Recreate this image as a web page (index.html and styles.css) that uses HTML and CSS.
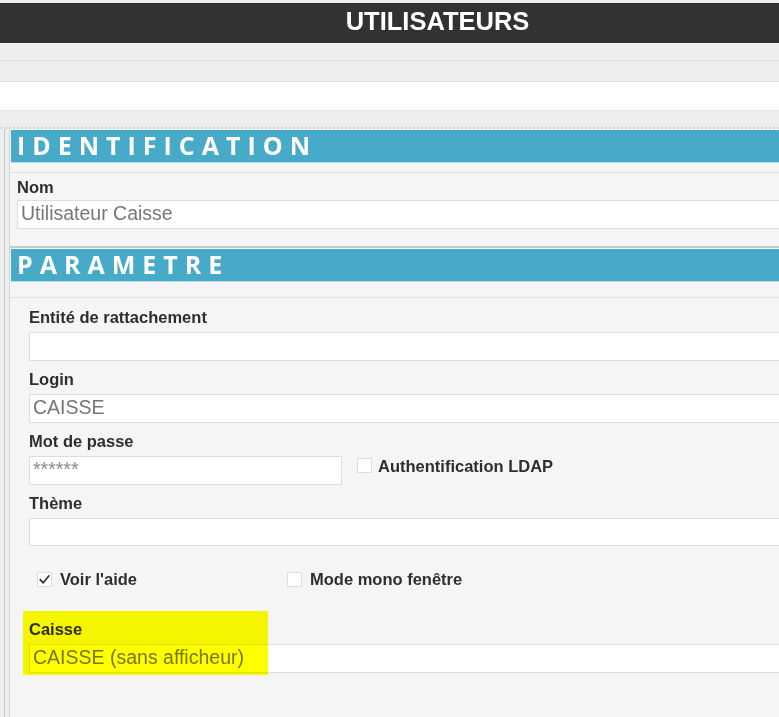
FILE: index.html
```html
<!DOCTYPE html>
<html lang="fr">
<head>
<meta charset="utf-8">
<title>Utilisateurs</title>
<link rel="stylesheet" href="styles.css">
</head>
<body>
<div class="page">
  <div class="top-edge"></div>
  <header class="titlebar"><h1 class="title">UTILISATEURS</h1></header>
  <div class="toolbar toolbar-a"></div>
  <div class="toolbar toolbar-b"></div>
  <div class="toolbar toolbar-white"></div>
  <div class="toolbar toolbar-c"></div>
  <div class="main">
    <div class="rail"></div>
    <div class="content">
      <section class="section section-ident">
        <h2 class="section-head">IDENTIFICATION</h2>
        <div class="subbar subbar-ident"></div>
        <div class="body body-ident">
          <div class="lbl">Nom</div>
          <div class="field">Utilisateur Caisse</div>
        </div>
      </section>
      <section class="section section-param">
        <h2 class="section-head">PARAMETRE</h2>
        <div class="subbar subbar-param"></div>
        <div class="body body-param">
          <div class="group">
            <div class="lbl">Entité de rattachement</div>
            <div class="field"></div>
          </div>
          <div class="group">
            <div class="lbl">Login</div>
            <div class="field">CAISSE</div>
          </div>
          <div class="group">
            <div class="lbl">Mot de passe</div>
            <div class="pw-row">
              <div class="field field-pw">******</div>
              <div class="check-item check-ldap">
                <span class="box"></span>
                <span class="check-label">Authentification LDAP</span>
              </div>
            </div>
          </div>
          <div class="group">
            <div class="lbl">Thème</div>
            <div class="field field-theme"></div>
          </div>
          <div class="checks">
            <div class="check-item">
              <span class="box"><svg class="tick" viewBox="0 0 15 15" width="15" height="15"><polyline points="3.2,7.6 6.2,10.8 12,3.8" fill="none" stroke="#333" stroke-width="1.7" stroke-linecap="round" stroke-linejoin="round"/></svg></span>
              <span class="check-label">Voir l'aide</span>
            </div>
            <div class="check-item">
              <span class="box"></span>
              <span class="check-label">Mode mono fenêtre</span>
            </div>
          </div>
          <div class="group group-caisse">
            <div class="lbl">Caisse</div>
            <div class="field">CAISSE (sans afficheur)</div>
            <div class="highlight"></div>
          </div>
        </div>
      </section>
    </div>
  </div>
</div>
</body>
</html>
```

FILE: styles.css
```css
html, body {
  margin: 0;
  padding: 0;
  height: 100%;
  overflow: hidden;
  background: #f5f5f5;
}

.page {
  width: 875px;
  min-height: 100vh;
  display: flex;
  flex-direction: column;
  font-family: "Liberation Sans", Arial, sans-serif;
}

.top-edge {
  height: 3px;
  background: #ececec;
}

.titlebar {
  height: 40px;
  background: #323232;
}

.title {
  margin: 0;
  text-align: center;
  color: #ffffff;
  font-size: 25.5px;
  font-weight: bold;
  line-height: 37px;
}

.toolbar {
  background: #eeeeee;
}

.toolbar-a {
  height: 17px;
  border-bottom: 1px solid #dedede;
}

.toolbar-b {
  height: 20px;
  border-bottom: 1px solid #e2e2e2;
}

.toolbar-white {
  height: 28px;
  background: #ffffff;
}

.toolbar-c {
  height: 16px;
  border-top: 1px solid #e4e4e4;
  border-bottom: 2px dotted #d4d4d4;
}

.main {
  flex: 1;
  display: flex;
}

.rail {
  width: 9px;
  flex: none;
  border-right: 1px solid #d2d2d2;
  background: linear-gradient(to right, #efefef 0, #efefef 4px, #c6c6c6 4px, #c6c6c6 5px, #efefef 5px);
}

.content {
  flex: 1;
  padding-top: 1px;
  background: #f5f5f5;
}

.section-head {
  margin: 0 0 0 1px;
  height: 32px;
  background: #47aac8;
  border-bottom: 1px solid #b9deea;
  color: #ffffff;
  font-family: "Open Sans", sans-serif;
  font-weight: bold;
  font-size: 25px;
  line-height: 31px;
  letter-spacing: 7px;
  padding-left: 6px;
}

.subbar {
  border-bottom: 1px solid #e0e0e0;
}

.subbar-ident {
  height: 9px;
}

.subbar-param {
  height: 15px;
}

.section-param {
  border-top: 2px solid #c6c9c9;
  padding-top: 1px;
}

.body-ident {
  padding: 4px 0 17px 7px;
}

.body-param {
  padding: 1px 0 0 19px;
}

.lbl {
  font-size: 16.5px;
  font-weight: bold;
  color: #2e2e2e;
  line-height: 20px;
  margin-bottom: 3px;
}

.body-param .lbl {
  margin-bottom: 5px;
}

.group {
  margin-top: 8px;
  position: relative;
}

.field {
  height: 26px;
  box-sizing: content-box;
  border: 1px solid #dedede;
  background: #ffffff;
  color: #777777;
  font-size: 19.5px;
  line-height: 22px;
  padding: 1px 3px 0;
  margin-right: 20px;
}

.field-theme {
  height: 25px;
}

.pw-row {
  display: flex;
  align-items: flex-start;
}

.field-pw {
  width: 305px;
  flex: none;
  margin-right: 0;
  color: #8a8a8a;
}

.check-item {
  display: flex;
  align-items: center;
  height: 20px;
}

.check-ldap {
  margin-left: 15px;
  align-items: flex-start;
}

.check-ldap .box {
  margin-top: 2px;
}

.box {
  width: 13px;
  height: 13px;
  border: 1px solid #dddddd;
  background: #ffffff;
  display: block;
  position: relative;
  flex: none;
}

.tick {
  position: absolute;
  left: -1px;
  top: -1px;
}

.check-label {
  margin-left: 8px;
  font-size: 16.5px;
  font-weight: bold;
  color: #2e2e2e;
  line-height: 20px;
}

.check-ldap .check-label {
  margin-left: 6px;
}

.checks {
  display: grid;
  grid-template-columns: 250px 250px;
  padding-left: 8px;
  margin-top: 23px;
}

.group-caisse {
  margin-top: 30px;
}

.highlight {
  position: absolute;
  left: -6px;
  top: -8px;
  width: 245px;
  height: 64px;
  background: #ffff00;
  mix-blend-mode: multiply;
  pointer-events: none;
}
```
